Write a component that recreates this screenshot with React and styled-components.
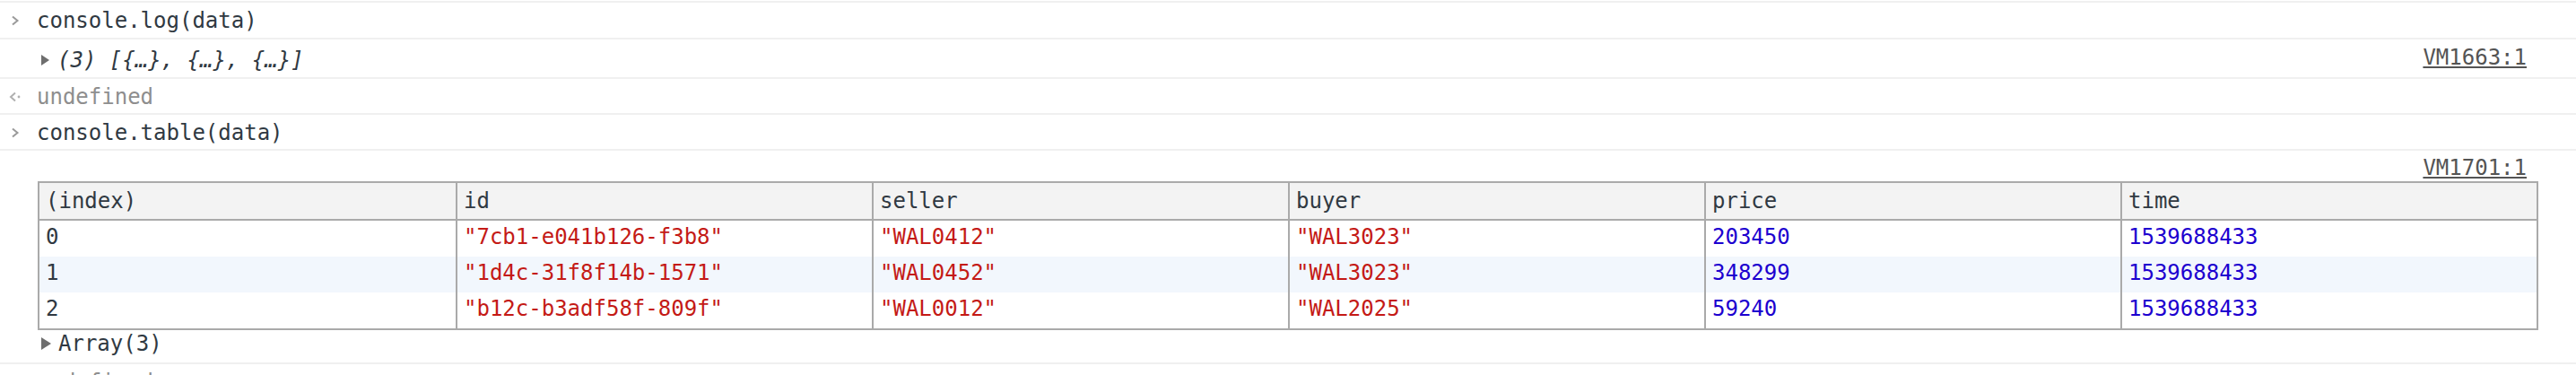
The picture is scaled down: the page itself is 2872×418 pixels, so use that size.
import React from 'react';
import styled, { createGlobalStyle } from 'styled-components';

const GlobalStyle = createGlobalStyle`
  html, body {
    margin: 0;
    padding: 0;
    background: #ffffff;
  }
  body {
    font-family: "DejaVu Sans Mono", "Liberation Mono", monospace;
    font-size: 24px;
    color: #303942;
    overflow: hidden;
  }
`;

const Console = styled.div`
  padding-top: 1px;
`;

const Message = styled.div`
  display: flex;
  align-items: flex-start;
  border-top: 2px solid #f0f0f0;
  padding: ${p => p.$pt ?? 6}px 55px ${p => p.$pb ?? 4}px 0;
  line-height: 28px;
  white-space: nowrap;
`;

const Gutter = styled.div`
  flex: none;
  width: 41px;
  height: 28px;
  display: flex;
  align-items: center;
  padding-left: ${p => p.$left ?? 12}px;
  box-sizing: border-box;
`;

const Text = styled.span`
  color: ${p => (p.$muted ? '#8e8e8e' : '#303942')};
  font-style: ${p => (p.$italic ? 'italic' : 'normal')};
`;

const Expandable = styled.div`
  display: flex;
  align-items: center;
  margin-top: ${p => p.$top ?? 0}px;
  margin-left: ${p => p.$indent ?? 5}px;
`;

const Triangle = styled.span`
  flex: none;
  width: 0;
  height: 0;
  border-top: ${p => p.$half ?? 6}px solid transparent;
  border-bottom: ${p => p.$half ?? 6}px solid transparent;
  border-left: ${p => p.$size ?? 9}px solid #6e6e6e;
  margin-right: ${p => p.$gap ?? 8}px;
`;

const SourceLink = styled.a`
  margin-left: auto;
  color: #545454;
  text-decoration: underline;
  text-decoration-thickness: 2px;
  text-underline-offset: 2px;
  cursor: pointer;
`;

const TableMessage = styled.div`
  border-top: 2px solid #f0f0f0;
  padding: 5px 42px 7px 42px;
  line-height: 28px;
  white-space: nowrap;
`;

const LinkLine = styled.div`
  display: flex;
  justify-content: flex-end;
  padding-right: 13px;
`;

const Table = styled.table`
  width: 100%;
  table-layout: fixed;
  border-collapse: separate;
  border-spacing: 0;
  border: 2px solid #aaaaaa;
  margin-top: 1px;
  font-size: 24px;
  line-height: 28px;
`;

const HeadCell = styled.th`
  background: #f3f3f3;
  font-weight: normal;
  text-align: left;
  padding: 6px 7px 6px;
  border-bottom: 2px solid #aaaaaa;
  border-left: ${p => (p.$first ? 'none' : '2px solid #aaaaaa')};
  color: #303942;
  overflow: hidden;
`;

const Row = styled.tr`
  background: ${p => (p.$odd ? '#f2f7fd' : '#ffffff')};
`;

const Cell = styled.td`
  padding: 4px 7px 8px;
  border-left: ${p => (p.$first ? 'none' : '2px solid #aaaaaa')};
  color: ${p => (p.$kind === 'string' ? '#c41a16' : p.$kind === 'number' ? '#1c00cf' : '#303942')};
  overflow: hidden;
`;

const ArrayLine = styled.div`
  display: flex;
  align-items: center;
  padding-top: 1px;
  margin-left: 4px;
`;

const PromptIcon = () => (
  <svg width="10" height="12" viewBox="0 0 10 12">
    <polyline points="2,1.5 7.5,6 2,10.5" fill="none" stroke="#9a9a9a" strokeWidth="2" />
  </svg>
);

const ResultIcon = () => (
  <svg width="14" height="12" viewBox="0 0 14 12">
    <polyline points="7,1.5 2,6 7,10.5" fill="none" stroke="#b0b0b0" strokeWidth="2" />
    <circle cx="11" cy="6" r="1.4" fill="#b0b0b0" />
  </svg>
);

const columns = ['(index)', 'id', 'seller', 'buyer', 'price', 'time'];

const rows = [
  { id: '7cb1-e041b126-f3b8', seller: 'WAL0412', buyer: 'WAL3023', price: 203450, time: 1539688433 },
  { id: '1d4c-31f8f14b-1571', seller: 'WAL0452', buyer: 'WAL3023', price: 348299, time: 1539688433 },
  { id: 'b12c-b3adf58f-809f', seller: 'WAL0012', buyer: 'WAL2025', price: 59240, time: 1539688433 },
];

export default function App() {
  return (
    <>
      <GlobalStyle />
      <Console>
        <Message $pt={6} $pb={5}>
          <Gutter><PromptIcon /></Gutter>
          <Text>console.log(data)</Text>
        </Message>

        <Message $pt={6} $pb={5}>
          <Gutter />
          <Expandable $top={3}>
            <Triangle $size={9} $half={6} $gap={9} />
            <Text $italic>(3) [{'{…}'}, {'{…}'}, {'{…}'}]</Text>
          </Expandable>
          <SourceLink>VM1663:1</SourceLink>
        </Message>

        <Message>
          <Gutter $left={10}><ResultIcon /></Gutter>
          <Text $muted>undefined</Text>
        </Message>

        <Message>
          <Gutter><PromptIcon /></Gutter>
          <Text>console.table(data)</Text>
        </Message>

        <TableMessage>
          <LinkLine>
            <SourceLink>VM1701:1</SourceLink>
          </LinkLine>
          <Table>
            <thead>
              <tr>
                {columns.map((c, i) => (
                  <HeadCell key={c} $first={i === 0}>{c}</HeadCell>
                ))}
              </tr>
            </thead>
            <tbody>
              {rows.map((r, i) => (
                <Row key={r.id} $odd={i % 2 === 1}>
                  <Cell $first>{i}</Cell>
                  <Cell $kind="string">"{r.id}"</Cell>
                  <Cell $kind="string">"{r.seller}"</Cell>
                  <Cell $kind="string">"{r.buyer}"</Cell>
                  <Cell $kind="number">{r.price}</Cell>
                  <Cell $kind="number">{r.time}</Cell>
                </Row>
              ))}
            </tbody>
          </Table>
          <ArrayLine>
            <Triangle $size={11} $half={7} $gap={8} />
            <Text>Array(3)</Text>
          </ArrayLine>
        </TableMessage>

        <Message>
          <Gutter $left={10}><ResultIcon /></Gutter>
          <Text $muted>undefined</Text>
        </Message>
      </Console>
    </>
  );
}
